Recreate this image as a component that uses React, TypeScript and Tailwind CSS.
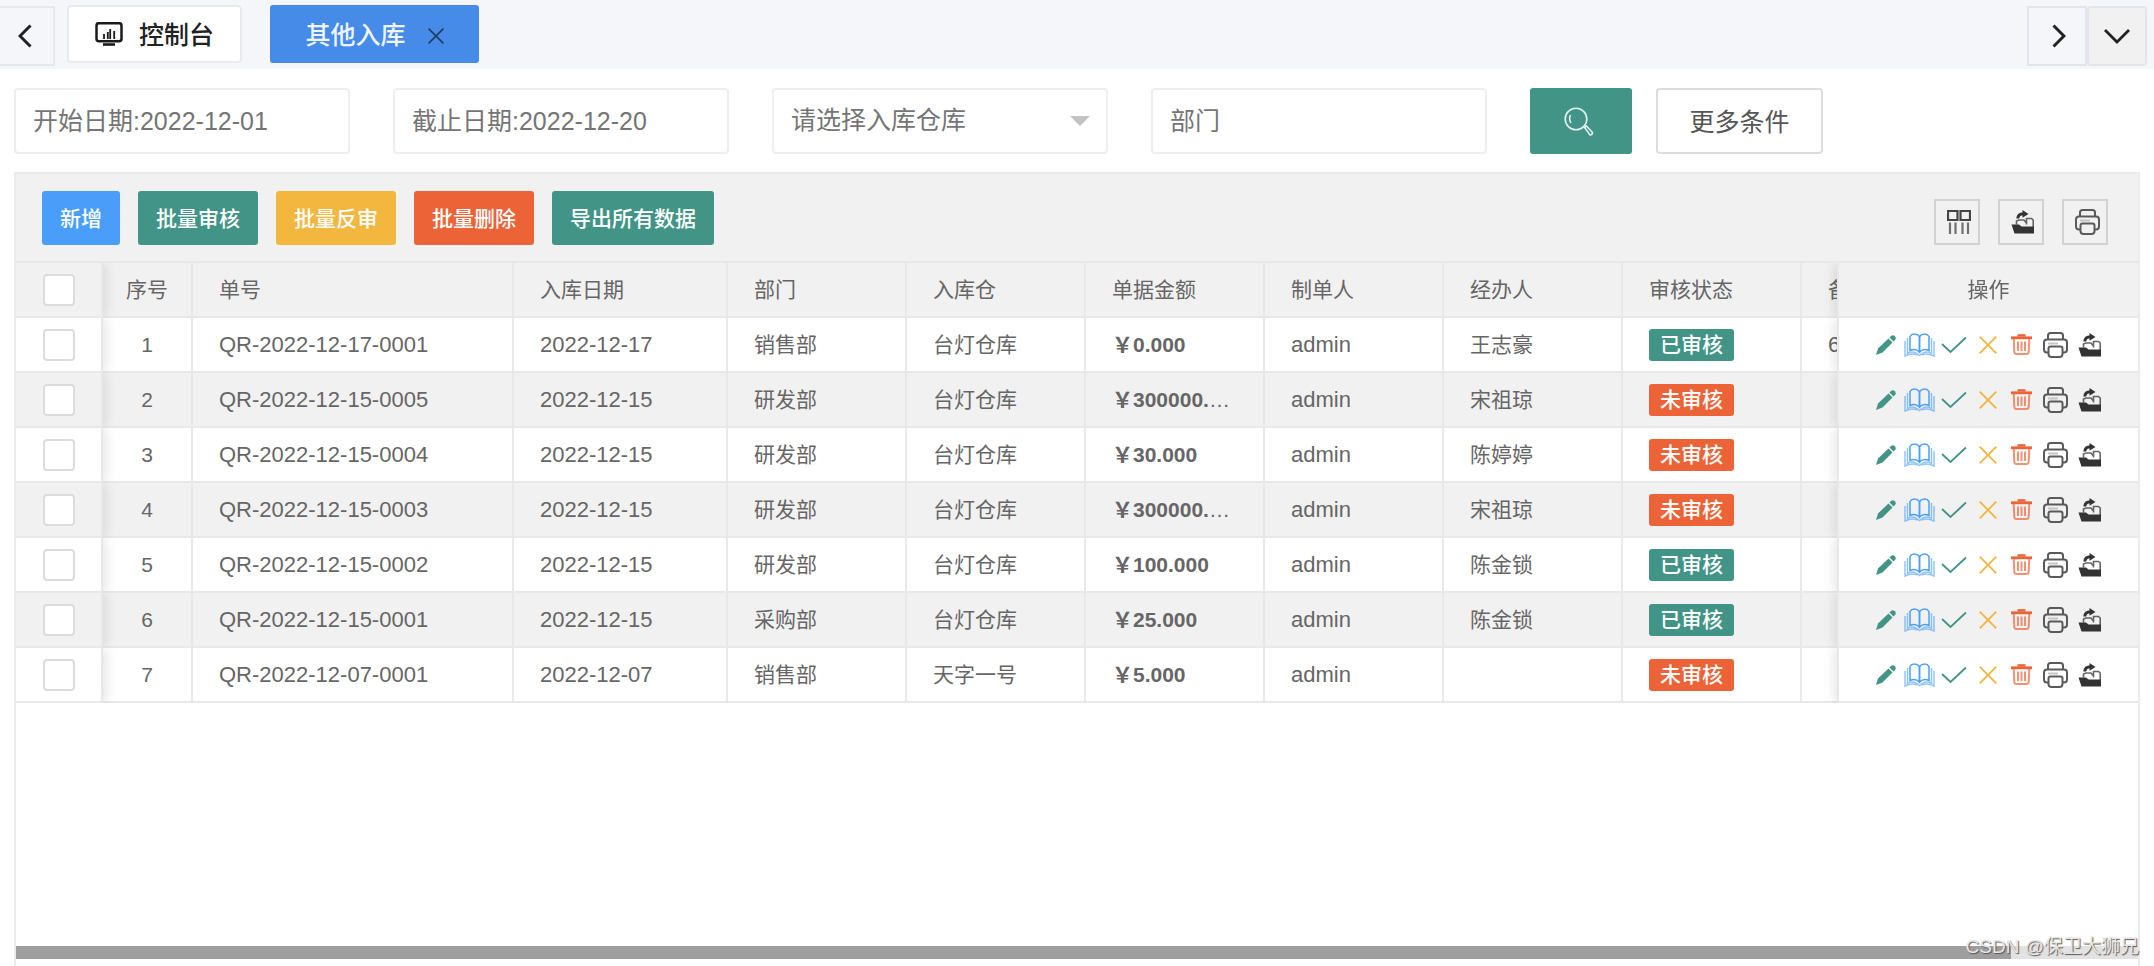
import React, { useState } from 'react';
import { clsx } from 'clsx';

interface Receipt {
  no: string;
  date: string;
  dept: string;
  warehouse: string;
  amount: string;
  creator: string;
  handler: string;
  audited: boolean;
  remark?: string;
}

const receipts: Receipt[] = [
  { no: 'QR-2022-12-17-0001', date: '2022-12-17', dept: '销售部', warehouse: '台灯仓库', amount: '0.000', creator: 'admin', handler: '王志豪', audited: true, remark: '6' },
  { no: 'QR-2022-12-15-0005', date: '2022-12-15', dept: '研发部', warehouse: '台灯仓库', amount: '300000.000', creator: 'admin', handler: '宋祖琼', audited: false },
  { no: 'QR-2022-12-15-0004', date: '2022-12-15', dept: '研发部', warehouse: '台灯仓库', amount: '30.000', creator: 'admin', handler: '陈婷婷', audited: false },
  { no: 'QR-2022-12-15-0003', date: '2022-12-15', dept: '研发部', warehouse: '台灯仓库', amount: '300000.000', creator: 'admin', handler: '宋祖琼', audited: false },
  { no: 'QR-2022-12-15-0002', date: '2022-12-15', dept: '研发部', warehouse: '台灯仓库', amount: '100.000', creator: 'admin', handler: '陈金锁', audited: true },
  { no: 'QR-2022-12-15-0001', date: '2022-12-15', dept: '采购部', warehouse: '台灯仓库', amount: '25.000', creator: 'admin', handler: '陈金锁', audited: true },
  { no: 'QR-2022-12-07-0001', date: '2022-12-07', dept: '销售部', warehouse: '天字一号', amount: '5.000', creator: 'admin', handler: '', audited: false },
];

const columns = ['单号', '入库日期', '部门', '入库仓', '单据金额', '制单人', '经办人', '审核状态', '备注'];

const bulkActions = [
  { label: '新增', color: 'bg-[#4a9efa]' },
  { label: '批量审核', color: 'bg-[#419486]' },
  { label: '批量反审', color: 'bg-[#f3b740]' },
  { label: '批量删除', color: 'bg-[#ec6337]' },
  { label: '导出所有数据', color: 'bg-[#419486]' },
];

const PencilIcon = () => (
  <svg width="20" height="20" viewBox="0 0 20 20" fill="#419486">
    <path d="M0 20 L2 13.5 L12.5 3.5 L16.5 7.5 L6.5 17.5 Z" />
    <path d="M13.5 2.5 L15 1 Q17 -0.5 18.8 1.2 Q20.5 3 19 5 L17.5 6.5 Z" />
  </svg>
);

const BookIcon = () => (
  <svg width="31" height="24" viewBox="0 0 31 24" fill="none" stroke="#4a9efa" strokeWidth="1.5">
    <path d="M15.5 19 V4 C14 0.5 8 0 6 3.5 V17.5 C9 16 13 16.5 15.5 19 Z" />
    <path d="M15.5 19 V4 C17 0.5 23 0 25 3.5 V17.5 C22 16 18 16.5 15.5 19 Z" />
    <g opacity="0.6">
      <path d="M3.5 5 V20.5 C7 18.5 11 19 13.5 21 L15.5 22.5 L17.5 21 C20 19 24 18.5 27.5 20.5 V5" />
      <path d="M1 8 V23 C6 20.5 10 20.5 13.5 22 M30 8 V23 C25 20.5 21 20.5 17.5 22" />
    </g>
  </svg>
);

const CheckIcon = () => (
  <svg width="26" height="18" viewBox="0 0 26 18" fill="none" stroke="#419486" strokeWidth="1.8">
    <path d="M1 8 L9.5 16 L25 1.5" />
  </svg>
);

const CrossIcon = ({ className }: { className: string }) => (
  <svg className={className} viewBox="0 0 18 18" fill="none" stroke="currentColor" strokeWidth="1.9">
    <path d="M0.7 0.7 L17.3 17.3 M17.3 0.7 L0.7 17.3" />
  </svg>
);

const TrashIcon = () => (
  <svg width="21" height="21" viewBox="0 0 21 21" fill="none" stroke="#ec6337">
    <path d="M0 3.8 H21" strokeWidth="2.8" />
    <path d="M6.5 1.4 H14.5" strokeWidth="2.4" />
    <path d="M2.7 5 L3.3 18 Q3.5 20 5.5 20 H15.5 Q17.5 20 17.7 18 L18.3 5" strokeWidth="2" opacity="0.7" />
    <path d="M7 7.5 V17 M10.5 7.5 V17 M14 7.5 V17" strokeWidth="2" opacity="0.7" />
  </svg>
);

const PrinterIcon = () => (
  <svg width="25" height="26" viewBox="0 0 25 26" fill="none" stroke="#5a5a5a" strokeWidth="2">
    <path d="M5 7.5 V3.5 Q5 1 7.5 1 H17.5 Q20 1 20 3.5 V7.5" />
    <path d="M5.5 20.5 H4 Q1 20.5 1 17.5 V10.5 Q1 7.5 4 7.5 H21 Q24 7.5 24 10.5 V17.5 Q24 20.5 21 20.5 H19.5" />
    <path d="M5 11.5 H15" stroke="#c4c4c4" />
    <path d="M5.5 16.5 Q5.5 14.5 7.5 14.5 H17.5 Q19.5 14.5 19.5 16.5 V22 Q19.5 25 16.5 25 H8.5 Q5.5 25 5.5 22 Z" />
  </svg>
);

const ExportIcon = () => (
  <svg width="24" height="24" viewBox="0 0 24 24" fill="none" stroke="#333">
    <path d="M0.5 14.5 H8 L10.5 16.5 H23 V23.5 H3.5 Z" fill="#333" stroke="none" />
    <path d="M5.5 14.5 V11 L8 10 H13 L15 12.5 M15.5 14.5 V8.5 H20.5 L22.2 10 V17" strokeWidth="1.6" opacity="0.75" />
    <path d="M6.8 8.5 C7 5.5 9 3.8 12.5 3.8" strokeWidth="3" />
    <path d="M11.5 0 L17.5 4 L11.5 7.8 Z" fill="#333" stroke="none" />
  </svg>
);

const ColumnsIcon = () => (
  <svg width="24" height="24" viewBox="0 0 24 24" fill="none" stroke="#444">
    <path d="M1 1 H10.5 V10 H1 Z M13.5 1 H23 V10 H13.5 Z" strokeWidth="2.2" />
    <path d="M3 12.5 V24 M8.5 12.5 V24 M15.5 12.5 V24 M21 12.5 V24" strokeWidth="2.2" opacity="0.75" />
  </svg>
);

const SearchIcon = () => (
  <svg width="30" height="29" viewBox="0 0 30 29" fill="none" stroke="#e3f1ef" strokeWidth="1.6">
    <circle cx="12" cy="12" r="10.8" />
    <path d="M6.5 8 Q4.5 12 7 16" />
    <path d="M20.5 20.5 L22.5 19 L28.5 25.5 Q28.5 28 26 28 Z" />
  </svg>
);

const DashboardIcon = () => (
  <svg width="28" height="24" viewBox="0 0 28 24" fill="none" stroke="#1a1a1a">
    <rect x="1.5" y="1.2" width="25" height="18" rx="2.5" strokeWidth="2.5" />
    <path d="M9 12 V17 M12.8 10 V17 M15.2 7 V17 M19.2 9 V17" strokeWidth="1.8" />
    <path d="M8 22.5 H20" strokeWidth="2.6" />
  </svg>
);

const rowActions = [
  { title: '编辑', icon: <PencilIcon /> },
  { title: '查看', icon: <BookIcon /> },
  { title: '审核', icon: <CheckIcon /> },
  { title: '反审', icon: <CrossIcon className="size-[18px] text-[#f3b740]" /> },
  { title: '删除', icon: <TrashIcon /> },
  { title: '打印', icon: <PrinterIcon /> },
  { title: '导出', icon: <ExportIcon /> },
];

const toolbarTools = [
  { title: '筛选列', icon: <ColumnsIcon /> },
  { title: '导出', icon: <ExportIcon /> },
  { title: '打印', icon: <PrinterIcon /> },
];

const fieldClass = 'h-[66px] w-[336px] rounded-[4px] border-2 border-[#eee] bg-white px-[17px] text-[25px] text-[#757575] outline-none placeholder:text-[#757575]';
const cellClass = 'h-[55px] border-r-2 border-b-2 border-[#e8e8e8] pl-[26px] pr-[25px] text-left font-normal truncate';
// shadow of a fixed column, kept inside its own row
const leftFixed = 'sticky left-0 z-10 shadow-[2px_0_12px_rgba(0,0,0,0.12)] [clip-path:inset(0_-24px_0_0)]';
const rightFixed = 'sticky right-0 z-10 border-l-2 shadow-[-2px_0_12px_rgba(0,0,0,0.12)] [clip-path:inset(0_0_0_-24px)]';

const CheckBox = ({ label, checked, onChange }: { label: string; checked: boolean; onChange: () => void }) => (
  <input
    type="checkbox"
    aria-label={label}
    checked={checked}
    onChange={onChange}
    className="block mx-auto size-8 appearance-none rounded-[4px] border-2 border-[#dcdcdc] bg-white checked:bg-[#419486]"
  />
);

export default function App() {
  const [selected, setSelected] = useState<string[]>([]);

  const toggle = (no: string) => {
    setSelected(selected.includes(no) ? selected.filter((n) => n !== no) : [...selected, no]);
  };

  const toggleAll = () => {
    setSelected(selected.length === receipts.length ? [] : receipts.map((r) => r.no));
  };

  return (
    <div className="relative min-h-screen flex flex-col bg-white font-['Liberation_Sans','Noto_Sans_CJK_SC',sans-serif]">
      {/* Page tabs */}
      <nav className="h-[69px] flex items-start bg-[#f5f6f9] pr-[7px] text-[25px]">
        <button title="向左" className="mt-[6px] h-[60px] w-[55px] flex items-center justify-center border-2 border-l-0 border-[#e6e8ee] pr-1">
          <svg width="14" height="24" viewBox="0 0 14 24" fill="none" stroke="#222" strokeWidth="3">
            <path d="M12.5 1.5 L2 12 L12.5 22.5" />
          </svg>
        </button>
        <button className="mt-[5px] ml-3 h-[58px] w-[175px] flex items-center justify-center gap-4 rounded-[4px] border-2 border-[#e8eaef] bg-white font-medium text-[#222]">
          <DashboardIcon />
          <span className="pt-1">控制台</span>
        </button>
        <div className="mt-[5px] ml-7 h-[58px] w-[209px] flex items-center justify-center gap-[22px] rounded-[3px] bg-[#468be8]">
          <button className="pt-1 font-medium text-[#eef5ff]">其他入库</button>
          <button title="关闭" className="pt-1"><CrossIcon className="size-4 text-[#1f3d66]" /></button>
        </div>
        <button title="向右" className="mt-[6px] ml-auto h-[60px] w-[60px] flex items-center justify-center border-2 border-[#e3e5ec] pl-1">
          <svg width="14" height="24" viewBox="0 0 14 24" fill="none" stroke="#222" strokeWidth="3">
            <path d="M1.5 1.5 L12 12 L1.5 22.5" />
          </svg>
        </button>
        <button title="更多标签" className="mt-[6px] h-[60px] w-[60px] flex items-center justify-center rounded-[4px] border-2 border-[#e3e5ec] bg-[#f1f1f1]">
          <svg width="26" height="15" viewBox="0 0 26 15" fill="none" stroke="#222" strokeWidth="2.8">
            <path d="M1 1 L13 13 L25 1" />
          </svg>
        </button>
      </nav>

      {/* Filters */}
      <form className="flex flex-wrap items-center px-[14px] pt-[19px] pb-[18px]" onSubmit={(e) => e.preventDefault()}>
        <div className="flex flex-wrap gap-[43px] mr-[43px]">
          <input aria-label="开始日期" placeholder="开始日期:2022-12-01" className={fieldClass} />
          <input aria-label="截止日期" placeholder="截止日期:2022-12-20" className={fieldClass} />
          <div className="relative">
            <select aria-label="入库仓库" className={clsx(fieldClass, 'appearance-none')}>
              <option>请选择入库仓库</option>
              <option>台灯仓库</option>
              <option>天字一号</option>
            </select>
            <svg className="pointer-events-none absolute right-[18px] top-7" width="20" height="10" viewBox="0 0 20 10" fill="#c2c2c2">
              <path d="M0 0 H20 L10 10 Z" />
            </svg>
          </div>
          <input aria-label="部门" placeholder="部门" className={fieldClass} />
        </div>
        <div className="flex gap-6">
          <button title="查询" className="h-[66px] w-[102px] flex items-center justify-center rounded-[3px] bg-[#419486] pr-1">
            <SearchIcon />
          </button>
          <button className="h-[66px] w-[167px] rounded-[4px] border-2 border-[#ddd] bg-white pt-1 text-[25px] text-[#555]">更多条件</button>
        </div>
      </form>

      <main className="mx-[14px] flex-1 flex flex-col border-2 border-b-0 border-[#ebebeb]">
        {/* Toolbar */}
        <div className="flex items-end justify-between border-b-2 border-[#e8e8e8] bg-[#f1f1f1] pt-[17px] pb-4 pl-[26px] pr-[30px]">
          <div className="flex gap-[18px]">
            {bulkActions.map((action) => (
              <button
                key={action.label}
                className={clsx('h-[54px] rounded-[3px] px-[18px] pt-0.5 text-[21px] font-medium text-white', action.color)}
              >
                {action.label}
              </button>
            ))}
          </div>
          <div className="flex gap-[18px]">
            {toolbarTools.map((tool) => (
              <button key={tool.title} title={tool.title} className="size-[46px] flex items-center justify-center border-2 border-[#d2d2d2] pl-1">
                {tool.icon}
              </button>
            ))}
          </div>
        </div>

        {/* Receipts */}
        <div className="flex-1 overflow-hidden">
          <table className="w-[2266px] table-fixed border-separate border-spacing-0 text-[21px] text-[#666]">
            <colgroup>
              <col className="w-[87px]" />
              <col className="w-[90px]" />
              <col className="w-[321px]" />
              <col className="w-[214px]" />
              <col className="w-[179px]" />
              <col className="w-[179px]" />
              <col className="w-[179px]" />
              <col className="w-[179px]" />
              <col className="w-[179px]" />
              <col className="w-[179px]" />
              <col className="w-[179px]" />
              <col className="w-[301px]" />
            </colgroup>
            <thead>
              <tr className="bg-[#f1f1f1]">
                <th className={clsx('h-[55px] border-r-2 border-b-2 border-[#e8e8e8] bg-[#f1f1f1] p-0', leftFixed)}>
                  <CheckBox label="全选" checked={selected.length === receipts.length} onChange={toggleAll} />
                </th>
                <th className="h-[55px] border-r-2 border-b-2 border-[#e8e8e8] p-0 text-center font-normal">序号</th>
                {columns.map((title) => (
                  <th key={title} className={cellClass}>{title}</th>
                ))}
                <th className={clsx('h-[55px] border-b-2 border-[#e8e8e8] bg-[#f1f1f1] p-0 text-center font-normal', rightFixed)}>操作</th>
              </tr>
            </thead>
            <tbody>
              {receipts.map((row, i) => {
                const bg = i % 2 ? 'bg-[#f1f1f1]' : 'bg-white';
                return (
                  <tr key={row.no} className={bg}>
                    <td className={clsx('h-[55px] border-r-2 border-b-2 border-[#e8e8e8] p-0', bg, leftFixed)}>
                      <CheckBox label={row.no} checked={selected.includes(row.no)} onChange={() => toggle(row.no)} />
                    </td>
                    <td className="h-[55px] border-r-2 border-b-2 border-[#e8e8e8] p-0 text-center">{i + 1}</td>
                    <td className={clsx(cellClass, 'text-[22px]')}>{row.no}</td>
                    <td className={clsx(cellClass, 'text-[22px]')}>{row.date}</td>
                    <td className={cellClass}>{row.dept}</td>
                    <td className={cellClass}>{row.warehouse}</td>
                    <td className={cellClass}><b>￥{row.amount}</b></td>
                    <td className={clsx(cellClass, 'text-[22px]')}>{row.creator}</td>
                    <td className={cellClass}>{row.handler}</td>
                    <td className={cellClass}>
                      <span className={clsx(
                        'block w-fit h-8 rounded-[3px] px-[11px] leading-8 font-medium text-white',
                        row.audited ? 'bg-[#419486]' : 'bg-[#ec6337]'
                      )}>
                        {row.audited ? '已审核' : '未审核'}
                      </span>
                    </td>
                    <td className={clsx(cellClass, 'text-[22px]')}>{row.remark}</td>
                    <td className={clsx('h-[55px] border-b-2 border-[#e8e8e8] p-0', bg, rightFixed)}>
                      <div className="flex items-center justify-center pr-0.5">
                        {rowActions.map((action) => (
                          <button key={action.title} title={action.title} className="w-[34px] flex justify-center">
                            {action.icon}
                          </button>
                        ))}
                      </div>
                    </td>
                  </tr>
                );
              })}
            </tbody>
          </table>
        </div>

        {/* Horizontal scroll bar */}
        <div className="mb-[7px] h-[13px] bg-[#e2e2e2]">
          <div className="h-full w-[94%] bg-[#9e9e9e]" />
        </div>
      </main>

      <p className="absolute right-[15px] bottom-[7px] text-[19px] leading-6 text-[#e6e6e6] [text-shadow:1px_1px_1px_#555]">CSDN @保卫大狮兄</p>
    </div>
  );
}
